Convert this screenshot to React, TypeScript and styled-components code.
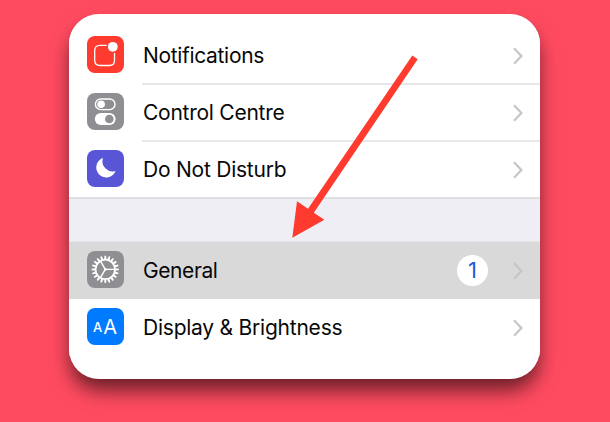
import React from "react";
import styled, { createGlobalStyle } from "styled-components";

const GlobalStyle = createGlobalStyle`
  * { box-sizing: border-box; }
  body { margin: 0; background: #ff4b60; }
`;

const Stage = styled.main`
  position: relative;
  width: 610px;
  height: 422px;
  padding: 14px 70px 0 69px;
  overflow: hidden;
  background: #ff4b60;
  font-family: Inter, "Liberation Sans", sans-serif;
`;

const Card = styled.section`
  height: 365px;
  padding-top: 14px;
  border-radius: 30px;
  overflow: hidden;
  background: #fff;
  box-shadow: 0 13px 20px -2px rgba(0, 0, 0, 0.6);
`;

const Row = styled.div<{ $selected?: boolean }>`
  display: flex;
  height: 57px;
  padding-left: 18px;
  background: ${(p) => (p.$selected ? "#d9d9d9" : "#fff")};
`;

const IconTile = styled.div<{ $color: string; $raised?: boolean }>`
  flex: none;
  width: 37px;
  height: 37px;
  margin-top: ${(p) => (p.$raised ? 8 : 9)}px;
  border-radius: 8px;
  background: ${(p) => p.$color};
  svg { display: block; }
`;

const Body = styled.div<{ $line?: boolean }>`
  flex: 1;
  display: flex;
  align-items: center;
  margin-left: 18px;
  padding: 0 17px 0 1px;
  border-bottom: ${(p) => (p.$line ? "2px solid #e8e8ea" : "0 solid")};
`;

const Label = styled.span<{ $spacing: number }>`
  flex: 1;
  font-size: 21px;
  line-height: 26px;
  letter-spacing: ${(p) => p.$spacing}px;
  white-space: nowrap;
  color: #080808;
`;

const Badge = styled.span`
  display: flex;
  align-items: center;
  justify-content: center;
  width: 31px;
  height: 31px;
  margin: -1px 25px 0 0;
  border-radius: 50%;
  background: #fff;
  color: #1d5be0;
  font-size: 22px;
`;

const GroupGap = styled.div`
  height: 43px;
  background: #efeef4;
  border-bottom: 1px solid #e4e4e8;
`;

const GroupEnd = styled.div`
  height: 2px;
  margin-top: -2px;
  position: relative;
  background: #e0e0e3;
`;

const Arrow = styled.svg`
  position: absolute;
  left: 0;
  top: 0;
  pointer-events: none;
`;

const Chevron = () => (
  <svg width="10" height="18" viewBox="0 0 10 18" fill="none" stroke="#c5c5ca" strokeWidth="2.2">
    <path d="M1 1.3 8.4 9 1 16.7" />
  </svg>
);

const NotificationsIcon = () => (
  <svg width="37" height="37" fill="none">
    <path d="M19.7 9.3H13Q7.7 9.3 7.7 14.6V24.2Q7.7 29.5 13 29.5H22.3Q27.5 29.5 27.5 24.2V17" stroke="#fff" strokeWidth="1.3" />
    <circle cx="25.8" cy="10.8" r="4.9" fill="#fff" />
  </svg>
);

const ControlIcon = () => (
  <svg width="37" height="37" fill="none">
    <rect x="8.4" y="6" width="19.6" height="10.6" rx="5.3" stroke="#fff" strokeWidth="1.4" />
    <circle cx="14.1" cy="11.3" r="3.8" fill="#fff" />
    <rect x="7.8" y="20" width="20.8" height="12" rx="6" fill="#fff" />
    <circle cx="22.3" cy="26" r="4.3" fill="#8e8e93" />
  </svg>
);

const MoonIcon = () => (
  <svg width="37" height="37">
    <path d="M16 8A10 10 0 1 0 28.6 21A10.2 10.2 0 0 1 16 8Z" fill="#fff" />
  </svg>
);

const TEETH = Array.from({ length: 20 }, (_, i) => i * 18);

const GearIcon = () => (
  <svg width="37" height="37" fill="none" stroke="#fff">
    <g transform="translate(18.3 18.4)">
      {TEETH.map((a) => (
        <path key={a} d="M-1.2 -10 -.75 -13.7H.75L1.2 -10Z" fill="#fff" stroke="none" transform={`rotate(${a})`} />
      ))}
      <circle r="9.7" strokeWidth="1.7" />
      <circle r="1.4" fill="#fff" stroke="none" />
      <path d="M0 0H9.7M0 0L-5 -8.5M0 0L-5 8.5" strokeWidth="1.4" />
    </g>
  </svg>
);

const SizesIcon = () => (
  <svg width="37" height="37" fill="#fff" fontFamily="Inter, sans-serif">
    <text x="6" y="24" fontSize="13" fontWeight="500">A</text>
    <text x="16.3" y="25.5" fontSize="20" fontWeight="400">A</text>
  </svg>
);

interface SettingProps {
  icon: React.ReactNode;
  color: string;
  label: string;
  spacing?: number;
  line?: boolean;
  raised?: boolean;
  selected?: boolean;
  badge?: string;
}

const Setting = ({ icon, color, label, spacing = 0, line, raised, selected, badge }: SettingProps) => (
  <Row $selected={selected}>
    <IconTile $color={color} $raised={raised}>{icon}</IconTile>
    <Body $line={line}>
      <Label $spacing={spacing}>{label}</Label>
      {badge && <Badge>{badge}</Badge>}
      <Chevron />
    </Body>
  </Row>
);

export default function App() {
  return (
    <Stage>
      <GlobalStyle />
      <Card>
        <Setting icon={<NotificationsIcon />} color="#ff3b30" label="Notifications" spacing={-0.33} line raised />
        <Setting icon={<ControlIcon />} color="#8e8e93" label="Control Centre" spacing={-0.25} line raised />
        <Setting icon={<MoonIcon />} color="#5856d6" label="Do Not Disturb" spacing={-0.23} line raised />
        <GroupEnd />
        <GroupGap />
        <Setting icon={<GearIcon />} color="#8e8e93" label="General" spacing={-0.4} selected badge="1" />
        <Setting icon={<SizesIcon />} color="#007aff" label="Display & Brightness" spacing={-0.23} />
      </Card>
      <Arrow width="610" height="422">
        <path d="M412.3 55.5 417.7 59.2 313.8 212.7 324.4 219.8 292.3 237.8 297 201.2 308 208.8Z" fill="#ff3b30" />
      </Arrow>
    </Stage>
  );
}
